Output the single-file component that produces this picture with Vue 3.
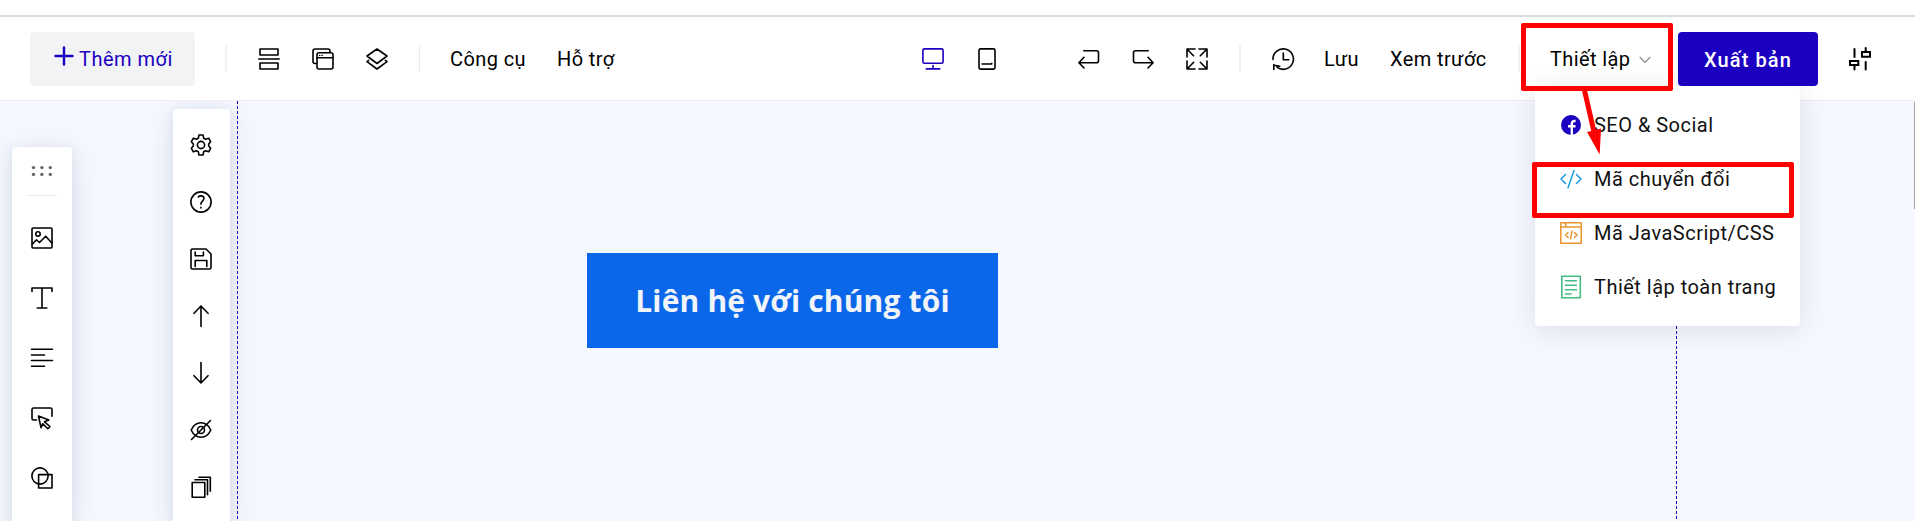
<script setup>
const blockTools = ['gear', 'help', 'save', 'up', 'down', 'hide', 'copy']
const insertTools = ['image', 'text', 'align', 'button', 'shape']

const icons = {
  rows: '<path d="M2 1h18v6H2zM2 15h18v6H2zM.8 11h20.4"/>',
  windows: '<path d="M4.5 15.5H3a2 2 0 0 1-2-2V3a2 2 0 0 1 2-2h13a2 2 0 0 1 2 2v1.5"/><rect x="5" y="4.7" width="16" height="16.3" rx="2"/><path d="M5 9.7h16"/><path stroke-width="1.2" d="M7.300 7.300h.6M9.800 7.300h.6"/>',
  layers: '<path d="M11 1l10 7-10 7.500L1 8zM2.600 12.300L1 13.700 11 21l10-7.300-1.600-1.400"/>',
  monitor: '<rect x=".9" y=".9" width="20.2" height="14.3" rx="1.500"/><path d="M11 17.500v3M4.300 20.900h13.500"/>',
  tablet: '<rect x="3" y=".9" width="16" height="20.200" rx="1.500"/><path stroke-width="1.4" d="M6 16h9.800v-.8"/>',
  undo: '<path d="M5.800 2.800H18.500a2 2 0 0 1 2 2V12.800a2 2 0 0 1-2 2H1M6 9.300L.900 14.800 6 20"/>',
  redo: '<path d="M16.200 2.800H3.500a2 2 0 0 0-2 2V12.800a2 2 0 0 0 2 2H21M16 9.300l5.100 5.500L16 20"/>',
  expand: '<path d="M9 1H1v8M1 1l6.500 6.700M13 1h8v8M21 1l-6.700 6.700M9 21H1v-8M1 21l6.700-6.700M13 21h8v-8M21 21l-6.700-6.700"/>',
  history: '<path d="M1 11.500A10.200 10.200 0 1 1 5 19.200M11.300 5v6.700h5.500M1.800 21.500v-5M2 17.200l5.800 1"/>',
  sliders: '<path stroke-width="2" d="M5.500 1v8M16.700 14v7.500M16.700 0v3.500M5.500 17v4.500M13 3.900h8v4.800h-8zM1 12.900h8.300v4H1z"/>',
  gear: '<path d="M9 1h4l.7 3.300 1.900 1 3.100-1.100 2 3.600-2 2.200v2l2 2.200-2 3.600-3.100-1.100-1.900 1L13 21H9l-.7-3.300-1.900-1-3.100 1.100-2-3.600 2-2.200v-2l-2-2.200 2-3.600 3.100 1.100 1.900-1z"/><circle cx="11" cy="11" r="3.600"/>',
  help: '<circle cx="11" cy="11" r="10.100"/><path d="M8.300 5.900C9.500 4.300 13.900 4.300 13.900 7.500c0 2.600-3 2.600-3 5.800M10.900 16.200v.8"/>',
  save: '<path d="M2.500 1H16l5 5v13.500a1.500 1.500 0 0 1-1.500 1.500h-17A1.500 1.500 0 0 1 1 19.500v-17A1.500 1.500 0 0 1 2.500 1zM5.200 4v3.800h8.200V4M5.200 18.500v-6h11.600v6"/>',
  up: '<path d="M11 21.500V1M4 8.300L11 1l7 7.300"/>',
  down: '<path d="M11 .5V21M4 13.700L11 21l7-7.300"/>',
  hide: '<path d="M1.200 11c2-4.500 5.800-7.200 9.800-7.200S18.800 6.500 20.800 11c-2 4.500-5.800 7.200-9.800 7.200S3.200 15.500 1.200 11zM1.500 20.500l19-19"/><circle cx="11" cy="11" r="3.500"/>',
  copy: '<path d="M2.200 6.500h12.600V21.200H2.200zM5 3.800h12.500v15M9 1.200h11.300v14"/>',
  image: '<rect x="1" y="1" width="20" height="20" rx="1"/><circle cx="7" cy="7" r="2.200"/><path d="M1.500 17l4-4.200 3 2.700 6.200-6.300L20.800 16"/>',
  text: '<path d="M1 4.500V1h20v3.500M11 1v20M6.300 21h9.500"/>',
  align: '<path d="M.5 2.300h21M.5 8h13M.5 13.500h21M.5 19.200h13"/>',
  button: '<path d="M5.500 13H2.500A1.500 1.500 0 0 1 1 11.500v-9A1.500 1.500 0 0 1 2.500 1h17A1.500 1.500 0 0 1 21 2.500v6.700M7.500 9l10.300 4-4.300 1.800 5.500 4.700-2.200 2.200-5-5-1.800 4z"/>',
  shape: '<circle cx="9" cy="9" r="8.100"/><path d="M7.600 7.600H21V21H7.600z"/>',
}

const menu = [
  { label: 'SEO & Social', color: '#1c00c2', icon: '<circle cx="11" cy="11" r="10" fill="currentColor" stroke="none"/><path stroke="#fff" stroke-width="2.400" stroke-linecap="butt" d="M11.800 21v-11c0-2.500 1.200-3.300 3.800-3M8 12.300h7.500"/>' },
  { label: 'Mã chuyển đổi', color: '#199be0', icon: '<path stroke-width="1.500" d="M5.500 6.500L1 11l4.500 4.500M16.500 6.500L21 11l-4.500 4.500M14 2.500L8 19.800"/>' },
  { label: 'Mã JavaScript/CSS', color: '#e8952e', icon: '<path stroke-width="1.500" d="M.8.8h20.400v20.400H.8zM.8 5h20.400M5.700.8V5M8 10.500L5.500 13 8 15.500M14.500 10.500L17 13l-2.500 2.500M12 9.300l-1.500 7.500"/>' },
  { label: 'Thiết lập toàn trang', color: '#3fbd83', icon: '<path stroke-width="1.600" d="M1.800.3h18.500v21.400H1.800zM5.500 4.800h11M5.500 9.300h11M5.500 13.700h11M5.500 18h5.500"/>' },
]
</script>

<template>
  <div class="page">
    <header class="bar">
      <button class="add">
        <svg class="plus" viewBox="0 0 20 20"><path d="M10 1.500v17M1.500 10h17" /></svg>
        <span>Thêm mới</span>
      </button>
      <i class="sep s1"></i>
      <div class="group views">
        <svg v-for="n in ['rows', 'windows', 'layers']" :key="n" class="ico" viewBox="0 0 22 22" v-html="icons[n]"></svg>
      </div>
      <i class="sep thin"></i>
      <span class="link tools">Công cụ</span>
      <span class="link support">Hỗ trợ</span>
      <div class="group devices">
        <svg class="ico active" viewBox="0 0 22 22" v-html="icons.monitor"></svg>
        <svg class="ico" viewBox="0 0 22 22" v-html="icons.tablet"></svg>
      </div>
      <div class="group edits">
        <svg v-for="n in ['undo', 'redo', 'expand']" :key="n" class="ico" viewBox="0 0 22 22" v-html="icons[n]"></svg>
      </div>
      <i class="sep s3"></i>
      <svg class="ico history" viewBox="0 0 22 22" v-html="icons.history"></svg>
      <span class="link store">Lưu</span>
      <span class="link preview">Xem trước</span>
      <i class="sep s4"></i>
      <div class="setup">
        <span class="link">Thiết lập</span>
        <svg class="chev" viewBox="0 0 12 8"><path d="M.7 1L6 6.500 11.300 1" /></svg>
      </div>
      <button class="publish">Xuất bản</button>
      <svg class="ico sliders" viewBox="0 0 22 22" v-html="icons.sliders"></svg>
    </header>

    <main class="canvas">
      <i class="guide left"></i>
      <i class="guide right"></i>
      <aside class="panel insert">
        <svg class="grip" viewBox="0 0 22 12">
          <circle v-for="k in 6" :key="k" :cx="2.500 + ((k - 1) % 3) * 8.400" :cy="k > 3 ? 9.400 : 2.600" r="1.700" />
        </svg>
        <i class="rule"></i>
        <div v-for="n in insertTools" :key="n" class="cell">
          <svg class="ico" viewBox="0 0 22 22" v-html="icons[n]"></svg>
        </div>
      </aside>
      <aside class="panel block">
        <div v-for="n in blockTools" :key="n" class="cell">
          <svg class="ico" viewBox="0 0 22 22" v-html="icons[n]"></svg>
        </div>
      </aside>
      <button class="cta">Liên hệ với chúng tôi</button>
    </main>

    <nav class="menu">
      <div v-for="m in menu" :key="m.label" class="item">
        <svg class="ico" viewBox="0 0 22 22" :style="{ color: m.color }" v-html="m.icon"></svg>
        <span>{{ m.label }}</span>
      </div>
    </nav>
    <i class="scroll"></i>

    <div class="mark mark-setup"></div>
    <div class="mark mark-code"></div>
    <svg class="arrow" viewBox="0 0 30 70">
      <path d="M3.500 0L14.500 48" stroke="#f00" stroke-width="5" />
      <path d="M7 46l14-3.500-1.300 26z" fill="#f00" />
    </svg>
  </div>
</template>

<style>
body { overflow: hidden; }
</style>

<style scoped>
.page { position: relative; box-sizing: border-box; width: 1915px; height: 521px; padding-top: 15px; overflow: hidden; background: #fff; color: #000; font: 20px/28px Roboto, "Liberation Sans", sans-serif; }
button { border: 0; padding: 0; font: inherit; }
.bar { box-sizing: border-box; height: 86px; display: flex; align-items: center; padding-left: 30px; border-top: 2px solid #d9dbdb; border-bottom: 1px solid #eee; white-space: nowrap; }
.add { width: 165px; height: 54px; display: flex; align-items: center; padding-left: 24px; gap: 5px; border-radius: 4px; background: #f1f3f5; color: #1c00c2; letter-spacing: .5px; }
.plus { width: 20px; height: 20px; margin-bottom: 5px; fill: none; stroke: currentColor; stroke-width: 2.4; stroke-linecap: round; }
.sep { width: 2px; height: 27px; flex: none; background: #f1f1f1; }
.sep.thin { width: 1px; margin-left: 31px; background: #eaeaea; }
.s1 { margin-left: 30px; }
.s3 { margin-left: 31px; }
.s4 { margin-left: 30px; }
.group { display: flex; gap: 32px; }
.views { margin-left: 31px; }
.devices { margin-left: 306px; }
.edits { margin-left: 80px; }
.ico { width: 22px; height: 22px; flex: none; overflow: visible; fill: none; stroke: currentColor; stroke-width: 1.6; stroke-linejoin: round; stroke-linecap: round; }
.active { color: #1c00c2; }
.link { flex: none; letter-spacing: .4px; }
.tools { width: 107px; margin-left: 30px; }
.support { width: 59px; }
.history { margin-left: 31px; }
.store { width: 66px; margin-left: 30px; }
.preview { width: 98px; }
.setup { display: flex; align-items: center; width: 128px; margin-left: 30px; }
.setup .link { width: 89px; }
.chev { width: 12px; height: 8px; margin-top: 2px; fill: none; stroke: #888; stroke-width: 1.2; }
.publish { width: 140px; height: 54px; padding-top: 3px; border-radius: 4px; background: #1c00c2; color: #fff; font-weight: 500; letter-spacing: 1.1px; }
.sliders { margin-left: 31px; stroke-linejoin: miter; }

.canvas { position: relative; height: 420px; background: #f5f8ff; overflow: hidden; }
.guide { position: absolute; top: 0; bottom: 0; width: 1px; background: repeating-linear-gradient(#1c00c2 0 3px, transparent 3px 5px); }
.guide.left { left: 237px; }
.guide.right { left: 1676px; }
.panel { position: absolute; bottom: -6px; box-sizing: border-box; display: flex; flex-direction: column; align-items: center; border-radius: 4px 4px 0 0; background: #fff; box-shadow: 0 6px 32px rgba(40, 50, 110, .1), 0 2px 12px rgba(40, 50, 70, .09); }
.insert { left: 12px; top: 46px; width: 60px; padding-top: 18px; }
.block { left: 173px; top: 8px; width: 57px; padding: 7px 1px 0 0; }
.cell { flex: none; display: flex; align-items: center; justify-content: center; height: 57px; }
.insert .cell { height: 60px; }
.grip { width: 22px; height: 12px; flex: none; fill: #666; }
.rule { width: 30px; height: 1px; flex: none; margin: 18px 0 12px; background: #eaeaea; }
.cta { position: absolute; left: 587px; top: 152px; width: 411px; height: 95px; background: #0a67ea; color: #f1f4f9; font: bold 30px/40px "Open Sans", sans-serif; letter-spacing: .17px; }

.menu { position: absolute; left: 1535px; top: 86px; box-sizing: border-box; width: 265px; height: 240px; padding: 12px 0 0 25px; border-radius: 4px; background: #fff; color: #111; letter-spacing: .48px; box-shadow: 0 4px 28px rgba(30, 40, 80, .12); }
.item { display: flex; align-items: center; gap: 12px; height: 54px; white-space: nowrap; }
.scroll { position: absolute; left: 1914px; top: 102px; width: 1px; height: 107px; background: #aaa; }
.mark { position: absolute; box-sizing: border-box; border: 5px solid #f00; border-radius: 2px; }
.mark-setup { left: 1521px; top: 23px; width: 152px; height: 68px; }
.mark-code { left: 1532px; top: 162px; width: 262px; height: 56px; }
.arrow { position: absolute; left: 1580px; top: 86px; width: 30px; height: 70px; fill: none; }
</style>
